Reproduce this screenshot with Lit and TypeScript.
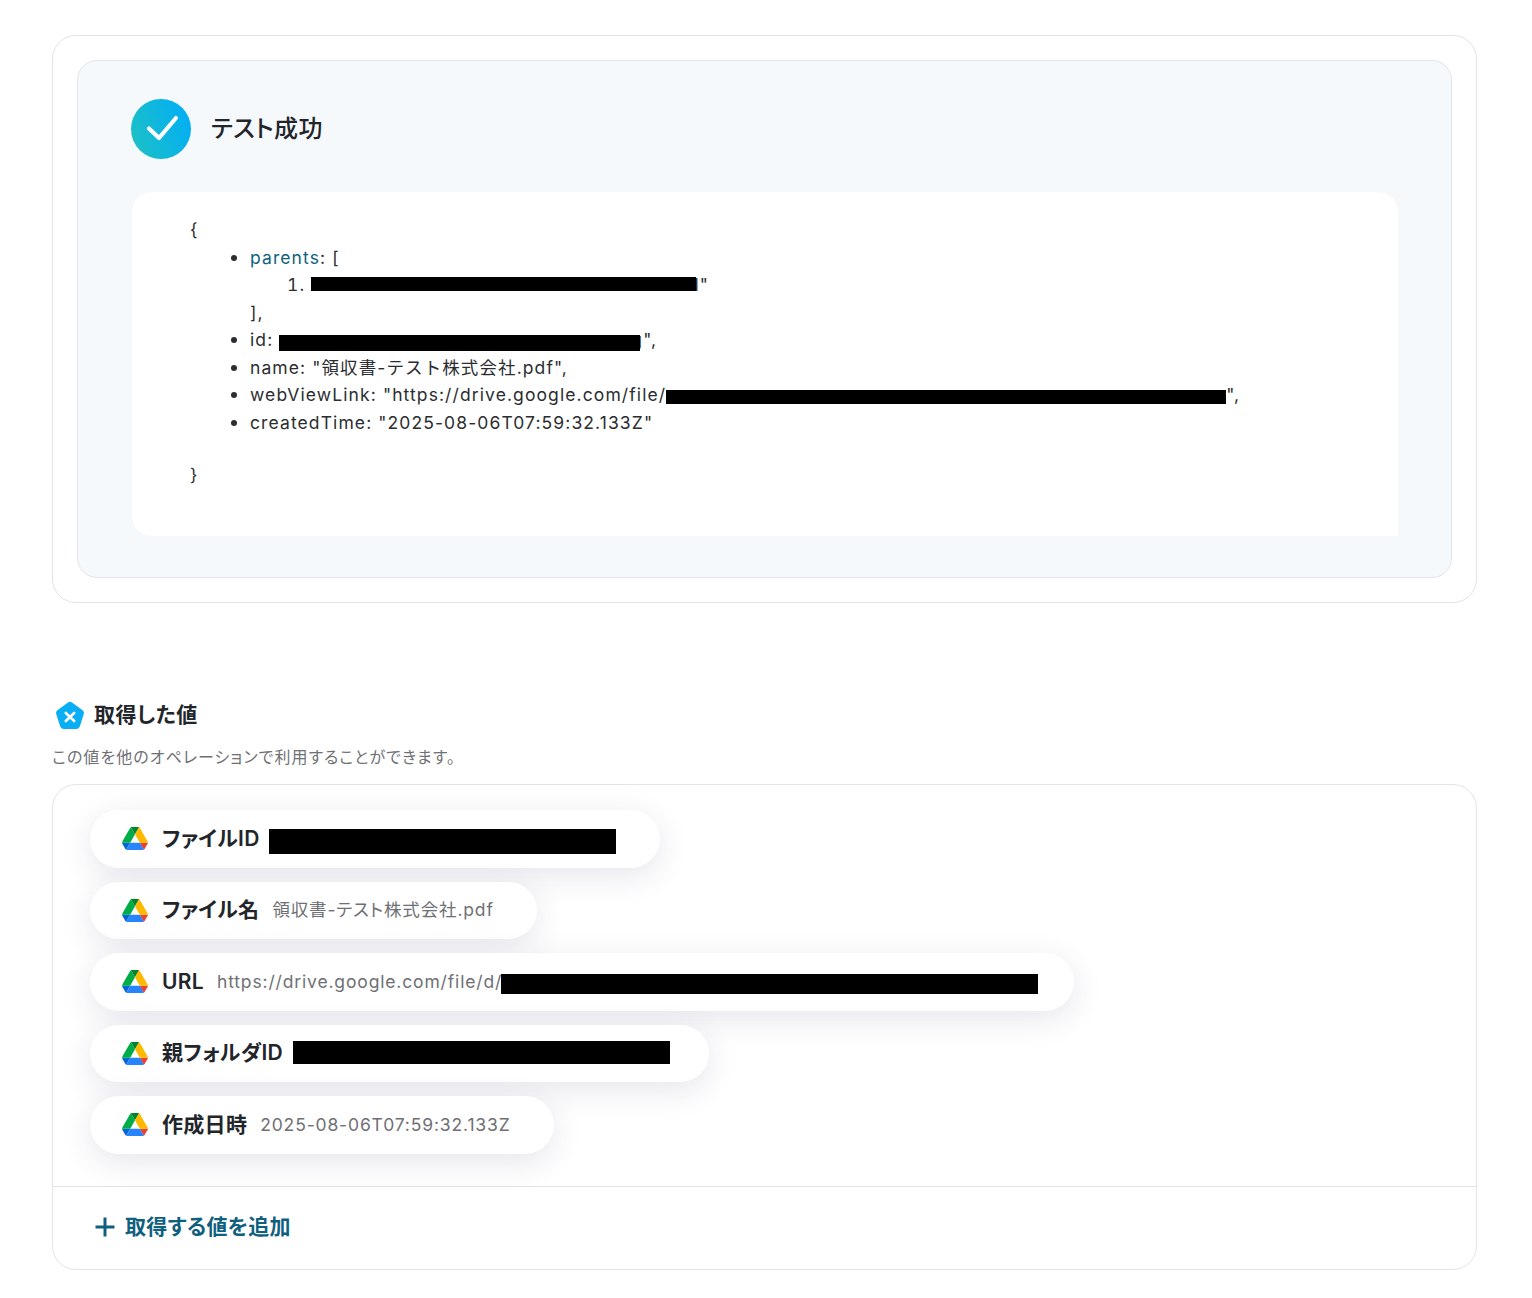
import { LitElement, html, css, svg } from "lit";
import { customElement } from "lit/decorators.js";

const drive = html`<svg class="drive" viewBox="0 0 87.3 78" aria-hidden="true">
  ${svg`<path d="m6.6 66.85 3.85 6.65c.8 1.4 1.95 2.5 3.3 3.3l13.75-23.8h-27.5c0 1.55.4 3.1 1.2 4.5z" fill="#0066da"/>
  <path d="m43.65 25-13.75-23.8c-1.35.8-2.5 1.9-3.3 3.3l-25.4 44a9.06 9.06 0 0 0 -1.2 4.5h27.5z" fill="#00ac47"/>
  <path d="m73.55 76.8c1.35-.8 2.5-1.9 3.3-3.3l1.6-2.75 7.65-13.25c.8-1.4 1.2-2.95 1.2-4.5h-27.502l5.852 11.5z" fill="#ea4335"/>
  <path d="m43.65 25 13.75-23.8c-1.35-.8-2.9-1.2-4.5-1.2h-18.5c-1.6 0-3.15.45-4.5 1.2z" fill="#00832d"/>
  <path d="m59.8 53h-32.3l-13.75 23.8c1.35.8 2.9 1.2 4.5 1.2h50.8c1.6 0 3.15-.45 4.5-1.2z" fill="#2684fc"/>
  <path d="m73.4 26.5-12.7-22c-.8-1.4-1.95-2.5-3.3-3.3l-13.75 23.8 16.15 28h27.45c0-1.55-.4-3.1-1.2-4.5z" fill="#ffba00"/>`}
</svg>`;

interface Row { label: string; value?: string; bar?: number; barH?: number; pr?: number; mt?: number }
const rows: Row[] = [
  { label: "ファイルID", bar: 347, barH: 25, pr: 44, mt: 6 },
  { label: "ファイル名", value: "領収書-テスト株式会社.pdf" },
  { label: "URL", value: "https://drive.google.com/file/d/", bar: 537, barH: 20, pr: 36, mt: 4 },
  { label: "親フォルダID", bar: 377, barH: 23, pr: 39, mt: -2 },
  { label: "作成日時", value: "2025-08-06T07:59:32.133Z" },
];

@customElement("app-root")
export class AppRoot extends LitElement {
  static styles = css`
    :host {
      display: block;
      box-sizing: border-box;
      padding: 35px 55px 28px 52px;
      background: #fff;
      color: #22252a;
      font-family: Inter, "Noto Sans CJK JP", "Noto Sans", sans-serif;
      font-feature-settings: "palt";
    }
    * { box-sizing: border-box; }
    .card {
      border: 1px solid #e4e3ea;
      border-radius: 24px;
      padding: 24px;
      background: #fff;
    }
    .inner {
      border: 1px solid #e4e3ea;
      border-radius: 20px;
      background: #f6f9fc;
      padding: 38px 53px 41px 53px;
    }
    .head {
      display: flex;
      align-items: center;
      gap: 20px;
      height: 60px;
      margin-bottom: 33px;
    }
    .check { width: 60px; height: 60px; flex: none; display: block; }
    .head h2 {
      margin: 0;
      font-size: 24px;
      line-height: 30px;
      font-weight: 500;
      letter-spacing: 0.4px;
      color: #22252a;
    }
    .result {
      background: #fff;
      border-radius: 20px 20px 0 20px;
      margin-left: 1px;
      height: 344px;
      padding: 24px 58px 0;
      font-size: 17.5px;
      line-height: 27.5px;
      letter-spacing: 1.1px;
      color: #2b2d31;
      font-feature-settings: normal;
    }
    .result ul { margin: 0; padding: 0 0 0 60px; list-style: disc; }
    .result ol { margin: 0; padding: 0 0 0 61px; }
    .result ul > li::marker { font-size: 1.15em; }
    .result .brace { height: 27.5px; }
    .result .gap { height: 24.5px; }
    .key { color: #0f5f7f; }
    .redact { display: inline-block; background: #000; vertical-align: middle; position: relative; z-index: 1; }
    .r1 { width: 385px; height: 14px; margin: -5px -8px 0 0; }
    .r2 { width: 361px; height: 16px; margin: 3px -9px 0 0; }
    .r3 { width: 560px; height: 14px; margin-top: 1px; }

    .title {
      display: flex;
      align-items: center;
      gap: 9px;
      margin: 98px 0 0 3px;
      height: 30px;
    }
    .title svg { width: 30px; height: 30px; display: block; flex: none; }
    .title h3 { margin: 0 0 2px; font-size: 21px; line-height: 28px; font-weight: 600; letter-spacing: 0.4px; color: #22252a; }
    .desc {
      margin: 14px 0 15px;
      font-size: 16px;
      line-height: 24px;
      letter-spacing: 1.05px;
      color: #6f7075;
    }
    .panel {
      border: 1px solid #e4e3ea;
      border-radius: 24px;
      background: #fff;
      overflow: hidden;
    }
    .rows {
      display: flex;
      flex-direction: column;
      align-items: flex-start;
      gap: 14px;
      padding: 25px 37px 32px;
      height: 401px;
    }
    .pill {
      display: flex;
      align-items: center;
      height: 57.5px;
      padding: 0 43px 0 32px;
      border-radius: 29px;
      background: #fff;
      box-shadow: 0 8px 32px rgba(50, 40, 90, 0.12);
    }
    .drive { width: 26px; height: 23px; flex: none; display: block; margin-right: 14px; }
    .label { font-size: 21px; line-height: 26px; font-weight: 600; letter-spacing: 0.3px; color: #22252a; white-space: nowrap; margin-right: 13px; }
    .value { font-size: 17.5px; line-height: 26px; letter-spacing: 0.85px; color: #6f7075; white-space: nowrap; }
    .pill .redact { margin-left: -1px; }
    .pill .label + .redact { margin-left: -3.5px; }
    .add {
      display: flex;
      align-items: center;
      gap: 9px;
      height: 83px;
      border-top: 1px solid #e4e3ea;
      padding: 0 0 2px 41px;
      font-size: 21px;
      line-height: 28px;
      font-weight: 600;
      letter-spacing: 0.3px;
      color: #0f5f7f;
    }
    .add svg { width: 22px; height: 22px; display: block; flex: none; }
  `;

  render() {
    return html`
      <section class="card">
        <div class="inner">
          <div class="head">
            <svg class="check" viewBox="0 0 60 60" aria-hidden="true">
              <defs>
                <linearGradient id="g" x1="0" y1="0.7" x2="1" y2="0.3">
                  <stop offset="0" stop-color="#1cc0c6" />
                  <stop offset="1" stop-color="#02aef5" />
                </linearGradient>
              </defs>
              <circle cx="30" cy="30" r="30" fill="url(#g)" />
              <path d="M18 29.5 L28 39 L45 19" fill="none" stroke="#fff" stroke-width="4.2" stroke-linecap="round" stroke-linejoin="round" />
            </svg>
            <h2>テスト成功</h2>
          </div>
          <div class="result">
            <div class="brace">{</div>
            <ul>
              <li>
                <span class="key">parents</span>: [
                <ol><li><span class="redact r1"></span>d"</li></ol>
                ],
              </li>
              <li>id: <span class="redact r2"></span>g",</li>
              <li>name: "領収書-テスト株式会社.pdf",</li>
              <li>webViewLink: "https://drive.google.com/file/<span class="redact r3"></span>",</li>
              <li>createdTime: "2025-08-06T07:59:32.133Z"</li>
            </ul>
            <div class="gap"></div>
            <div class="brace">}</div>
          </div>
        </div>
      </section>

      <div class="title">
        <svg viewBox="0 0 30 30" aria-hidden="true">
          <path d="M13 1.6a3.4 3.4 0 0 1 4 0l10.6 7.7a3.4 3.4 0 0 1 1.2 3.8l-4 12.4a3.4 3.4 0 0 1-3.2 2.4H8.4a3.4 3.4 0 0 1-3.2-2.4l-4-12.4a3.4 3.4 0 0 1 1.2-3.8z" fill="#0aaef5" />
          <path d="M10.8 12 L19.2 20 M19.2 12 L10.8 20" stroke="#fff" stroke-width="2.6" stroke-linecap="round" fill="none" />
        </svg>
        <h3>取得した値</h3>
      </div>
      <p class="desc">この値を他のオペレーションで利用することができます。</p>
      <section class="panel">
        <div class="rows">
          ${rows.map(
            (r) => html`<div class="pill" style=${r.pr ? `padding-right:${r.pr}px` : ""}>
              ${drive}
              <span class="label">${r.label}</span>
              ${r.value ? html`<span class="value">${r.value}</span>` : ""}
              ${r.bar ? html`<span class="redact" style="width:${r.bar}px;height:${r.barH}px;margin-top:${r.mt}px"></span>` : ""}
            </div>`
          )}
        </div>
        <div class="add">
          <svg viewBox="0 0 22 22" aria-hidden="true">
            <path d="M11 1.5V20.5M1.5 11H20.5" stroke="#0f5f7f" stroke-width="3" fill="none" />
          </svg>
          <span>取得する値を追加</span>
        </div>
      </section>
    `;
  }
}
